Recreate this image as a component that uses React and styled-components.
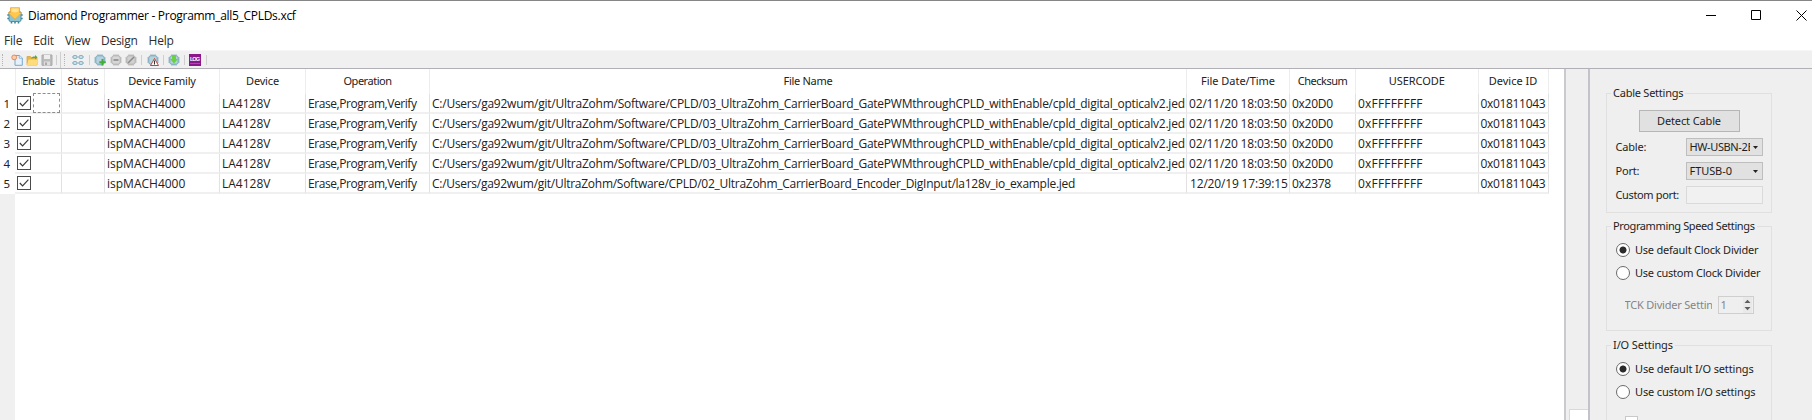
import React from "react";
import styled, { createGlobalStyle } from "styled-components";

const Global = createGlobalStyle`
  *, *::before, *::after { box-sizing: border-box; }
  body { margin: 0; background: #fff; overflow: hidden; }
`;

const segoe = "'Segoe UI', 'Open Sans', 'Liberation Sans', sans-serif";
const tahoma = "'Noto Sans', 'Liberation Sans', sans-serif";

const Label = styled.span`
  letter-spacing: ${(p) => p.$ls || 0}px;
  white-space: nowrap;
`;

const Window = styled.div`
  width: 1812px;
  height: 420px;
  display: flex;
  flex-direction: column;
  overflow: hidden;
  background: #fff;
  border-top: 1px solid #868686;
  color: #222;
  font: 12px/16px ${segoe};
`;
const TitleBar = styled.header`
  height: 29px;
  display: flex;
  align-items: center;
  padding: 0 4px 0 7px;
  color: #000;
`;
const Title = styled.h1`
  flex: 1;
  margin: 0 0 0 5px;
  font: 12px/16px ${segoe};
`;
const WindowButtons = styled.div`
  display: flex;
  gap: 34px;
  margin-right: 1px;
`;
const MenuBar = styled.nav`
  height: 20px;
  display: flex;
  align-items: center;
  gap: 11px;
  padding: 1px 0 0 4px;
  color: #2c2c2c;
`;
const Toolbar = styled.div`
  height: 19px;
  display: flex;
  align-items: center;
  padding: 0 0 0 1px;
  background: #f0f0f0;
  border-bottom: 1px solid #b0b0b6;
  border-top: 1px solid #f6f6f6;
`;
const ToolGroup = styled.div`
  display: flex;
  align-items: center;
  gap: 3.3px;
  padding: ${(p) => p.$pad || "0 4px"};
  border-right: 1px solid #cfcfcf;
  height: ${(p) => (p.$tall ? 16 : 10)}px;
`;
const Grip = styled.span`
  width: 2px;
  height: 12px;
  border-left: 1px dotted #b4b4b4;
`;
const Body = styled.main`
  flex: 1;
  display: flex;
  min-height: 0;
  background: #efefef;
`;
const TablePane = styled.section`
  width: 1566px;
  border-right: 2px solid #c9c9ce;
  background: #fff;
  display: grid;
  grid-template-columns: 15px 1fr;
  grid-template-rows: 25px 100px 1fr;
`;
const cols = "47px 43px 115px 86px 124px 757px 103px 66px 122.5px 70px";
const HeaderRow = styled.div`
  display: grid;
  grid-template-columns: ${cols};
  font: 11px/24px ${tahoma};
  text-align: center;
`;
const HeaderCell = styled.div`
  border-right: 1px solid #ededed;
  &:first-child { border-left: 1px solid #ededed; }
`;
const RowNumbers = styled.div`
  display: grid;
  grid-template-rows: repeat(5, 20px);
`;
const RowNumber = styled.div`
  font: 11.5px/19px ${tahoma};
  padding-left: 3.5px;
`;
const Rows = styled.div`
  display: grid;
  grid-template-rows: repeat(5, 20px);
`;
const Row = styled.div`
  display: grid;
  grid-template-columns: ${cols};
  width: fit-content;
  height: 20px;
`;
const Cell = styled.div`
  border-right: 1px solid #e2e2e2;
  border-bottom: 2px solid #f0f0f0;
  padding-left: ${(p) => (p.$indent ? 3 : 2)}px;
  line-height: 20px;
  height: 20px;
  overflow: hidden;
  white-space: nowrap;
`;
const EnableCell = styled(Cell)`
  display: flex;
  align-items: center;
  gap: 2px;
  padding: 0 1px 0 2px;
  overflow: visible;
`;
const FocusBox = styled.span`
  flex: 1;
  height: 20px;
  border: 1px dashed #8d8d8d;
`;
const GutterFill = styled.div`
  background: #f0f0f0;
`;
const Splitter = styled.div`
  width: 22px;
  display: flex;
  align-items: flex-end;
  padding-left: 3px;
`;
const ScrollCorner = styled.div`
  flex: 1;
  height: 11px;
  background: #fff;
  border-top: 1px solid #d9d9d9;
  border-left: 1px solid #d9d9d9;
`;
const SidePane = styled.aside`
  flex: 1;
  border-left: 2px solid #c3c4cb;
  padding: 16px 0 0 16px;
  font: 11px/16px ${tahoma};
  color: #1e1e1e;
`;
const Group = styled.fieldset`
  width: 166px;
  height: ${(p) => p.$h}px;
  margin: 0 0 ${(p) => p.$gap || 0}px;
  padding: 0 0 0 8.5px;
  border: 1px solid #e0e0e0;
  min-width: 0;
`;
const Legend = styled.legend`
  height: 16px;
  margin-left: -4.5px;
  padding: 0 2px;
`;
const Button = styled.button`
  display: block;
  width: 101px;
  height: 22px;
  margin: 9px 0 6px 23px;
  padding: 0;
  font: inherit;
  color: inherit;
  background: #e1e1e1;
  border: 1px solid #b6b6b6;
`;
const Field = styled.div`
  display: grid;
  grid-template-columns: 70.5px 77px;
  align-items: center;
  height: 18px;
  margin-bottom: 6px;
`;
const Combo = styled.div`
  height: 18px;
  display: flex;
  align-items: center;
  justify-content: space-between;
  padding: 0 4px 0 2.5px;
  background: #e1e1e1;
  border: 1px solid #bebebe;
`;
const ComboText = styled.div`
  width: 60px;
  overflow: hidden;
  white-space: nowrap;
  line-height: 16px;
`;
const TextBox = styled.div`
  height: 18px;
  border: 1px solid #dadada;
  background: #f1f1f1;
`;
const RadioRow = styled.div`
  display: flex;
  align-items: center;
  gap: 5.5px;
  height: 16px;
  margin-top: ${(p) => p.$top}px;
`;
const RadioDot = styled.span`
  flex: none;
  width: 14px;
  height: 14px;
  border-radius: 50%;
  border: 1px solid #6b6b6b;
  background: ${(p) =>
    p.$on ? "radial-gradient(circle, #2b2b2b 3.1px, #fff 3.9px)" : "#fff"};
`;
const SpinRow = styled.div`
  display: flex;
  align-items: center;
  height: 18px;
  margin: 15px 0 0 9px;
  color: #858585;
`;
const SpinLabel = styled.div`
  width: 87px;
  margin-right: 6px;
  overflow: hidden;
  white-space: nowrap;
`;
const Spin = styled.div`
  width: 36px;
  height: 18px;
  display: flex;
  align-items: center;
  justify-content: space-between;
  padding: 0 1px 0 2px;
  border: 1px solid #cfcfcf;
`;
const Check = styled.div`
  width: 13px;
  height: 13px;
  margin: 16px 0 0 9px;
  background: #fff;
  border: 1px solid #c9c9c9;
`;

const Chip = ({ tone = "#78a9bb", fill = "#b5d3de", children }) => (
  <svg width="12" height="12" viewBox="0 0 12 12">
    <path d="M4 .3v11.4M6 .3v11.4M8 .3v11.4M.3 4h11.4M.3 6h11.4M.3 8h11.4" stroke={tone} strokeWidth="1" />
    <rect x="1.8" y="1.8" width="8.4" height="8.4" rx="2" fill={fill} stroke={tone} />
    {children}
  </svg>
);
const AppIcon = () => (
  <svg width="16" height="17" viewBox="0 0 16 17">
    <path d="M4.500 16.500v-3M8 16.500v-3M11.500 16.500v-3M.3 8h3M.3 11.500h3M12.500 8h3.200M12.500 11.500h3.200" stroke="#3f8397" strokeWidth="1.600" />
    <rect x="2" y="4.500" width="12" height="10" rx="1.500" fill="#8dc4d5" stroke="#4c91a7" />
    <path d="M3.500 .7h9v5h2.300L8 12.300 1.200 5.700h2.300z" fill="#ffc84c" stroke="#e9a83c" strokeWidth=".8" />
    <path d="M4.500 1.400h7v3l-3.500 1-3.500-1z" fill="#ffe39a" />
  </svg>
);
const NewIcon = () => (
  <svg width="12" height="12" viewBox="0 0 12 12">
    <path d="M4 1.500h4.500L11.300 4v7.300H4z" fill="#e4f0fa" stroke="#78a8d0" />
    <path d="M8.300 1.500V4.200h3" fill="#fff" stroke="#78a8d0" strokeWidth=".8" />
    <circle cx="3.200" cy="3.400" r="2.400" fill="#fbd0a8" stroke="#e18a65" />
  </svg>
);
const OpenIcon = () => (
  <svg width="12" height="12" viewBox="0 0 12 12">
    <path d="M1 2.500h3.500l1 1.200H11v7.300H1z" fill="#e7b840" stroke="#d7a544" strokeWidth=".8" />
    <path d="M1 11l1.500-5.500h9L10.800 11z" fill="#ffdc7b" />
    <path d="M5 4.500C6 2.500 7.500 2.200 9 2.500V1l2.500 2.300L9 5.500V4C7.500 3.700 6 4 5 4.500z" fill="#5ba84b" />
  </svg>
);
const SaveIcon = () => (
  <svg width="12" height="12" viewBox="0 0 12 12">
    <path d="M1 1h10v10.300H1z" fill="#bcbcbc" stroke="#a9a9a9" />
    <path d="M3 1h6v4H3z" fill="#eee" />
    <path d="M3 7.500h6v4H3z" fill="#dedede" />
    <path d="M4 8.500h2v2.500H4z" fill="#a9a9a9" />
  </svg>
);
const ScanIcon = () => (
  <svg width="12" height="12" viewBox="0 0 12 12">
    <g fill="#c9dfe8" stroke="#7fa9ba">
      <rect x="1.200" y="1.500" width="3.600" height="3" rx="1" />
      <rect x="7.200" y="1.500" width="3.600" height="3" rx="1" />
      <rect x="1.200" y="7.500" width="3.600" height="3" rx="1" />
      <rect x="7.200" y="7.500" width="3.600" height="3" rx="1" />
    </g>
    <path d="M0 3h1M5 3h2M11 3h1M0 9h1M5 9h2M11 9h1" stroke="#8fb4c3" />
  </svg>
);
const LogIcon = () => (
  <svg width="12" height="12" viewBox="0 0 12 12">
    <rect width="12" height="12" fill="#8b168b" />
    <text x="1" y="6.800" fontSize="5.600" fontWeight="700" fontFamily="Liberation Sans, sans-serif" fill="#fff" textLength="10">LOG</text>
    <path d="M1 9.500h10" stroke="#a84aa8" />
  </svg>
);
const CheckBox = () => (
  <svg width="14" height="14" viewBox="0 0 14 14">
    <rect x=".5" y=".5" width="13" height="13" fill="#fff" stroke="#4a4a4a" />
    <path d="M2.800 7l2.800 2.900 5.800-6.200" fill="none" stroke="#3c3c3c" strokeWidth="1.200" />
  </svg>
);
const Caret = () => (
  <svg width="5" height="3" viewBox="0 0 5 3">
    <path d="M0 0h5L2.500 3z" fill="#222" />
  </svg>
);
const SpinArrows = () => (
  <svg width="9" height="16" viewBox="0 0 9 16">
    <path d="M0 0h9v16H0z" fill="#e9e9e9" />
    <path d="M1.500 6L4.500 2.700l3 3.300zM1.500 10L4.500 13.300l3-3.300z" fill="#5e5e5e" />
  </svg>
);

const headers = [
  ["Enable", -0.38], ["Status", -0.24], ["Device Family", -0.22], ["Device", -0.18],
  ["Operation", -0.48], ["File Name", -0.3], ["File Date/Time", -0.02],
  ["Checksum", -0.49], ["USERCODE", -0.06], ["Device ID", 0],
];
const optical =
  "C:/Users/ga92wum/git/UltraZohm/Software/CPLD/03_UltraZohm_CarrierBoard_GatePWMthroughCPLD_withEnable/cpld_digital_opticalv2.jed";
const encoder =
  "C:/Users/ga92wum/git/UltraZohm/Software/CPLD/02_UltraZohm_CarrierBoard_Encoder_DigInput/la128v_io_example.jed";
const device = (file, date, checksum) => ({ file, date, checksum });
const devices = [
  ...Array.from({ length: 4 }, () => device(optical, "02/11/20 18:03:50", "0x20D0")),
  device(encoder, "12/20/19 17:39:15", "0x2378"),
];

const Radio = ({ on, top, ls, children }) => (
  <RadioRow $top={top}>
    <RadioDot $on={on} />
    <Label $ls={ls}>{children}</Label>
  </RadioRow>
);

export default function App() {
  return (
    <Window>
      <Global />
      <TitleBar>
        <AppIcon />
        <Title><Label $ls={-0.29}>Diamond Programmer - Programm_all5_CPLDs.xcf</Label></Title>
        <WindowButtons>
          <svg width="11" height="11"><path d="M0 5.500h10" stroke="#000" /></svg>
          <svg width="11" height="11"><path d="M.5.5h9v9h-9z" fill="none" stroke="#000" /></svg>
          <svg width="11" height="11"><path d="M.5.5l10 10M10.500.5l-10 10" stroke="#000" /></svg>
        </WindowButtons>
      </TitleBar>
      <MenuBar>
        <Label $ls={-0.2}>File</Label>
        <Label $ls={-0.15}>Edit</Label>
        <Label $ls={-0.3}>View</Label>
        <Label $ls={-0.25}>Design</Label>
        <Label $ls={-0.2}>Help</Label>
      </MenuBar>
      <Toolbar>
        <ToolGroup $pad="0 3px 0 1px">
          <Grip /><span /><NewIcon /><OpenIcon /><SaveIcon />
        </ToolGroup>
        <ToolGroup $tall $pad="0 2.5px 0 0" />
        <ToolGroup $pad="0 5px 0 3px">
          <Grip /><span /><ScanIcon />
        </ToolGroup>
        <ToolGroup>
          <Chip><path d="M8.500 5v6.500M5.300 8.200h6.400" stroke="#43ad3a" strokeWidth="2" /></Chip>
          <Chip tone="#b0b0b0" fill="#d7d7d7"><path d="M3.500 6h5" stroke="#999" strokeWidth="2" /></Chip>
          <Chip tone="#b0b0b0" fill="#d0d0d0"><path d="M3 9l6-6" stroke="#888" strokeWidth="1.500" /></Chip>
        </ToolGroup>
        <ToolGroup $pad="0 4px 0 5px">
          <Chip>
            <path d="M7.500 4.500l4 7h-8z" fill="#fff" stroke="#c9403a" />
            <path d="M7.500 6.500v4" stroke="#333" />
          </Chip>
        </ToolGroup>
        <ToolGroup>
          <Chip><path d="M4 1h4v4h2L6 9.500 2 5h2z" fill="#69d143" /></Chip>
        </ToolGroup>
        <ToolGroup $pad="0 5px 0 4px"><LogIcon /></ToolGroup>
      </Toolbar>
      <Body>
        <TablePane>
          <div />
          <HeaderRow>
            {headers.map(([name, ls]) => (
              <HeaderCell key={name}><Label $ls={ls}>{name}</Label></HeaderCell>
            ))}
          </HeaderRow>
          <RowNumbers>
            {devices.map((d, i) => <RowNumber key={i}>{i + 1}</RowNumber>)}
          </RowNumbers>
          <Rows>
            {devices.map((d, i) => (
              <Row key={i}>
                <EnableCell><CheckBox />{i === 0 && <FocusBox />}</EnableCell>
                <Cell />
                <Cell>ispMACH4000</Cell>
                <Cell>LA4128V</Cell>
                <Cell><Label $ls={-0.44}>Erase,Program,Verify</Label></Cell>
                <Cell><Label $ls={d.file === optical ? -0.244 : -0.27}>{d.file}</Label></Cell>
                <Cell $indent={i === 4}><Label $ls={-0.17}>{d.date}</Label></Cell>
                <Cell><Label $ls={-0.28}>{d.checksum}</Label></Cell>
                <Cell><Label $ls={0.2}>0xFFFFFFFF</Label></Cell>
                <Cell><Label $ls={-0.33}>0x01811043</Label></Cell>
              </Row>
            ))}
          </Rows>
          <GutterFill />
        </TablePane>
        <Splitter><ScrollCorner /></Splitter>
        <SidePane>
          <Group $h={128} $gap={5}>
            <Legend><Label $ls={-0.24}>Cable Settings</Label></Legend>
            <Button><Label $ls={-0.13}>Detect Cable</Label></Button>
            <Field>
              <Label $ls={-0.2}>Cable:</Label>
              <Combo><ComboText><Label $ls={-0.38}>HW-USBN-2B</Label></ComboText><Caret /></Combo>
            </Field>
            <Field>
              <Label $ls={-0.2}>Port:</Label>
              <Combo><ComboText><Label $ls={-0.07}>FTUSB-0</Label></ComboText><Caret /></Combo>
            </Field>
            <Field>
              <Label $ls={-0.36}>Custom port:</Label>
              <TextBox />
            </Field>
          </Group>
          <Group $h={113} $gap={6}>
            <Legend><Label $ls={-0.38}>Programming Speed Settings</Label></Legend>
            <Radio on top={8} ls={-0.23}>Use default Clock Divider</Radio>
            <Radio top={7} ls={-0.23}>Use custom Clock Divider</Radio>
            <SpinRow>
              <SpinLabel><Label $ls={-0.2}>TCK Divider Setting</Label></SpinLabel>
              <Spin>1<SpinArrows /></Spin>
            </SpinRow>
          </Group>
          <Group $h={120}>
            <Legend><Label $ls={-0.1}>I/O Settings</Label></Legend>
            <Radio on top={8} ls={-0.15}>Use default I/O settings</Radio>
            <Radio top={7} ls={-0.15}>Use custom I/O settings</Radio>
            <Check />
          </Group>
        </SidePane>
      </Body>
    </Window>
  );
}
